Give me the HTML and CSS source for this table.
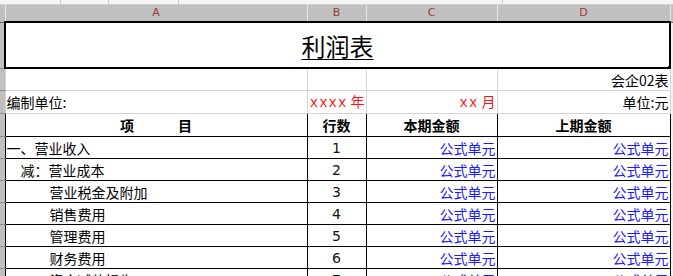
FILE: index.html
```html
<!DOCTYPE html>
<html lang="zh">
<head>
<meta charset="utf-8">
<link rel="stylesheet" href="styles.css">
</head>
<body>
<div class="topstrip"><span class="tick t1"></span><span class="tick t2"></span><span class="tick t3"></span><span class="tick t4"></span></div>
<table class="sheet">
  <colgroup>
    <col class="c-rh"><col class="c-a"><col class="c-b"><col class="c-c"><col class="c-d"><col class="c-rest">
  </colgroup>
  <tr class="colhead">
    <th class="corner"></th><th>A</th><th>B</th><th>C</th><th>D</th><th class="rest"></th>
  </tr>
  <tr class="r-title">
    <th class="rh"></th>
    <td colspan="4" class="title"><span>利润表</span><i class="handle"></i></td>
    <td class="rest"></td>
  </tr>
  <tr class="r-plain">
    <th class="rh"></th><td class="grid"></td><td class="grid"></td><td class="grid"></td><td class="grid right">会企02表</td><td class="rest"></td>
  </tr>
  <tr class="r-plain">
    <th class="rh"></th><td class="grid">编制单位:</td><td class="grid right red"><span class="mono">xxxx</span> 年</td><td class="grid right red"><span class="mono">xx</span> 月</td><td class="grid right">单位:元</td><td class="rest"></td>
  </tr>
  <tr class="r-head">
    <th class="rh"></th><td class="b center bold">项<span class="gap"></span>目</td><td class="b center bold">行数</td><td class="b center bold">本期金额</td><td class="b center bold">上期金额</td><td class="rest"></td>
  </tr>
  <tr class="r-data">
    <th class="rh"></th><td class="b">一、营业收入</td><td class="b center num">1</td><td class="b right blue">公式单元</td><td class="b right blue">公式单元</td><td class="rest"></td>
  </tr>
  <tr class="r-data">
    <th class="rh"></th><td class="b ind1">减：营业成本</td><td class="b center num">2</td><td class="b right blue">公式单元</td><td class="b right blue">公式单元</td><td class="rest"></td>
  </tr>
  <tr class="r-data">
    <th class="rh"></th><td class="b ind2">营业税金及附加</td><td class="b center num">3</td><td class="b right blue">公式单元</td><td class="b right blue">公式单元</td><td class="rest"></td>
  </tr>
  <tr class="r-data">
    <th class="rh"></th><td class="b ind2">销售费用</td><td class="b center num">4</td><td class="b right blue">公式单元</td><td class="b right blue">公式单元</td><td class="rest"></td>
  </tr>
  <tr class="r-data">
    <th class="rh"></th><td class="b ind2">管理费用</td><td class="b center num">5</td><td class="b right blue">公式单元</td><td class="b right blue">公式单元</td><td class="rest"></td>
  </tr>
  <tr class="r-data">
    <th class="rh"></th><td class="b ind2">财务费用</td><td class="b center num">6</td><td class="b right blue">公式单元</td><td class="b right blue">公式单元</td><td class="rest"></td>
  </tr>
  <tr class="r-data">
    <th class="rh"></th><td class="b ind2">资产减值损失</td><td class="b center num">7</td><td class="b right blue">公式单元</td><td class="b right blue">公式单元</td><td class="rest"></td>
  </tr>
</table>
</body>
</html>
```

FILE: styles.css
```css
html, body {
  margin: 0;
  padding: 0;
  background: #ffffff;
  overflow: hidden;
}
body {
  width: 673px;
  height: 276px;
  font-family: "Noto Sans CJK SC", "Noto Sans", sans-serif;
  font-size: 14px;
  color: #000;
}
.topstrip {
  height: 4px;
  background: #f4f4f4;
  border-bottom: 1px solid #d0d0d0;
  position: relative;
}
.tick {
  position: absolute;
  top: 0;
  width: 1px;
  height: 4px;
  background: #c8c8c8;
}
.t1 { left: 60px; }
.t2 { left: 108px; }
.t3 { left: 178px; }
.t4 { left: 502px; }

.sheet {
  border-collapse: collapse;
  table-layout: fixed;
  width: 673px;
}
.c-rh { width: 5px; }
.c-a { width: 302px; }
.c-b { width: 59px; }
.c-c { width: 131px; }
.c-d { width: 173px; }
.c-rest { width: 3px; }

td, th {
  padding: 0;
  margin: 0;
  white-space: nowrap;
  overflow: hidden;
  line-height: 20px;
}
.colhead th {
  height: 16px;
  background: #c0c0c0;
  border-right: 1px solid #e8e8e8;
  border-left: 1px solid #8c8c8c;
  border-bottom: 1px solid #6a6a6a;
  color: #a5343f;
  font-family: "DejaVu Sans", sans-serif;
  font-weight: normal;
  font-size: 11px;
  line-height: 16px;
}
.colhead .corner { border-left: none; }
.rh {
  background: #c0c0c0;
  border-bottom: 1px solid #8c8c8c;
  border-top: 1px solid #eeeeee;
}
.rest { background: #f2f2f2; border: none; }

.r-title td.title {
  height: 44px;
  border: 2px solid #000;
  text-align: center;
  position: relative;
  vertical-align: middle;
}
.title span {
  font-size: 24px;
  text-decoration: underline;
  text-underline-offset: 3px;
  text-decoration-thickness: 1px;
  line-height: 30px;
  font-family: "Noto Sans CJK SC", sans-serif;
  position: relative;
  top: 1px;
}
.handle {
  position: absolute;
  right: -4px;
  bottom: -4px;
  width: 4px;
  height: 4px;
  background: #000;
  border: 1px solid #fff;
}
.r-plain td { height: 21px; }
.grid {
  border: 1px solid #d4d4d4;
  padding: 0 1px;
}
.r-head td { height: 22px; }
.r-data td { height: 21px; }
.b {
  border: 1px solid #000;
  padding: 0 1px;
}
.center { text-align: center; }
.right { text-align: right; }
.bold { font-weight: bold; }
.red { color: #ff1010; }
.mono {
  font-family: "Liberation Mono", monospace;
  font-size: 14px;
  letter-spacing: 1px;
}
.blue { color: #1a1aff; }
.gap { display: inline-block; width: 44px; }
.ind1 { padding-left: 15px; }
.ind2 { padding-left: 44px; }
.num { font-family: "DejaVu Sans", sans-serif; font-size: 14px; font-weight: normal; color: #111; }
```
